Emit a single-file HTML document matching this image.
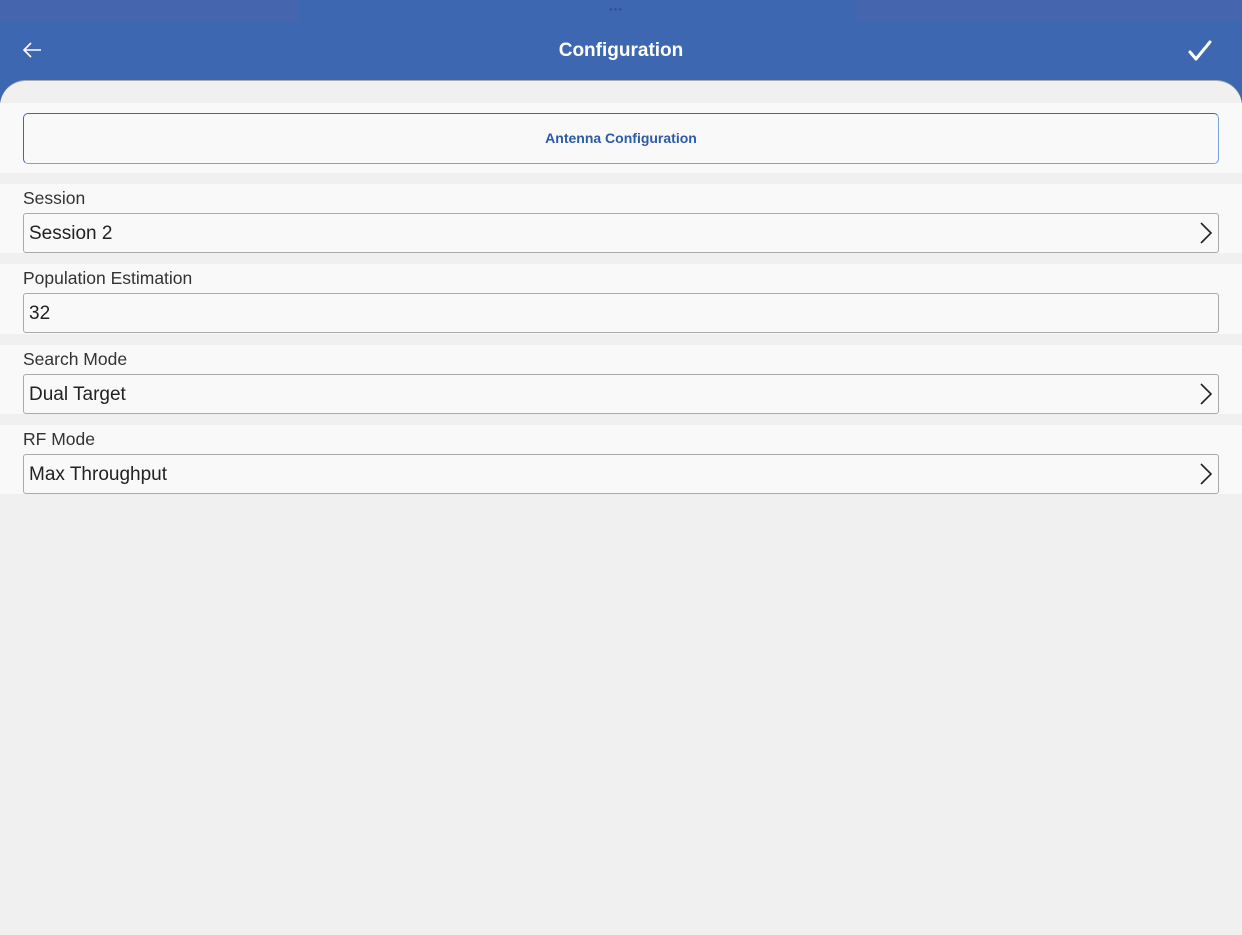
<!DOCTYPE html>
<html><head><style>
body{margin:0;width:1242px;height:934px;background:#3d67b1;font-family:"Liberation Sans",sans-serif;overflow:hidden;position:relative}
.top{position:absolute;left:0;top:0;width:1242px;height:22px;background:#4566ae}
.top .mid{position:absolute;left:300px;width:555px;top:0;height:22px;background:#3d67b1}
.dots{position:absolute;left:609px;top:7px;font-size:6px;color:#30508f;letter-spacing:1px}
.title{position:absolute;top:40px;width:100%;text-align:center;color:#fff;font-size:19px;font-weight:bold}
.page{position:absolute;left:0;top:80px;width:1242px;height:854px;background:#f0f0f0;border-radius:26px 26px 0 0;border-top:1px solid #aaa}
.sec{position:absolute;left:0;width:1242px;background:#f9f9f9}
.lab{position:absolute;left:23px;font-size:17.5px;color:#333}
.box{position:absolute;left:23px;width:1194px;height:38px;border:1px solid #aaa;border-radius:3px;background:#f9f9f9;font-size:19px;color:#222;line-height:40px;box-sizing:content-box}
.box span{position:absolute;left:5px}
.box svg{position:absolute;right:5px;top:8px}
.btn{position:absolute;left:23px;top:32px;width:1194px;height:49px;border:1px solid #3d67b1;border-bottom-color:#7da2d6;border-right-color:#7da2d6;border-radius:5px;text-align:center;line-height:48px;font-size:14px;font-weight:bold;color:#2b5aa8}
</style></head><body>
<div class="top"><div class="mid"></div><div class="dots">●●●</div></div>
<svg style="position:absolute;left:22px;top:42px" width="20" height="16" viewBox="0 0 20 16"><path d="M19 8H2M9 1L2 8l7 7" stroke="#fff" stroke-width="1.6" fill="none"/></svg>
<div class="title">Configuration</div>
<svg style="position:absolute;left:1188px;top:40px" width="24" height="22" viewBox="0 0 24 22"><path d="M2 12l6 7L22 2" stroke="#fff" stroke-width="3" fill="none" stroke-linecap="round" stroke-linejoin="round"/></svg>
<div class="page">
<div class="sec" style="top:22px;height:70px"></div>
<div class="btn" style="top:32px">Antenna Configuration</div>
<div class="sec" style="top:103px;height:69px"><div class="lab" style="top:4px">Session</div><div class="box" style="top:29px"><span>Session 2</span><svg width="14" height="22"><path d="M2 1l10 10L2 21" stroke="#222" stroke-width="1.6" fill="none"/></svg></div></div>
<div class="sec" style="top:183px;height:70px"><div class="lab" style="top:4px">Population Estimation</div><div class="box" style="top:29px"><span>32</span></div></div>
<div class="sec" style="top:264px;height:69px"><div class="lab" style="top:4px">Search Mode</div><div class="box" style="top:29px"><span>Dual Target</span><svg width="14" height="22"><path d="M2 1l10 10L2 21" stroke="#222" stroke-width="1.6" fill="none"/></svg></div></div>
<div class="sec" style="top:344px;height:69px"><div class="lab" style="top:4px">RF Mode</div><div class="box" style="top:29px"><span>Max Throughput</span><svg width="14" height="22"><path d="M2 1l10 10L2 21" stroke="#222" stroke-width="1.6" fill="none"/></svg></div></div>
</div>
</body></html>
